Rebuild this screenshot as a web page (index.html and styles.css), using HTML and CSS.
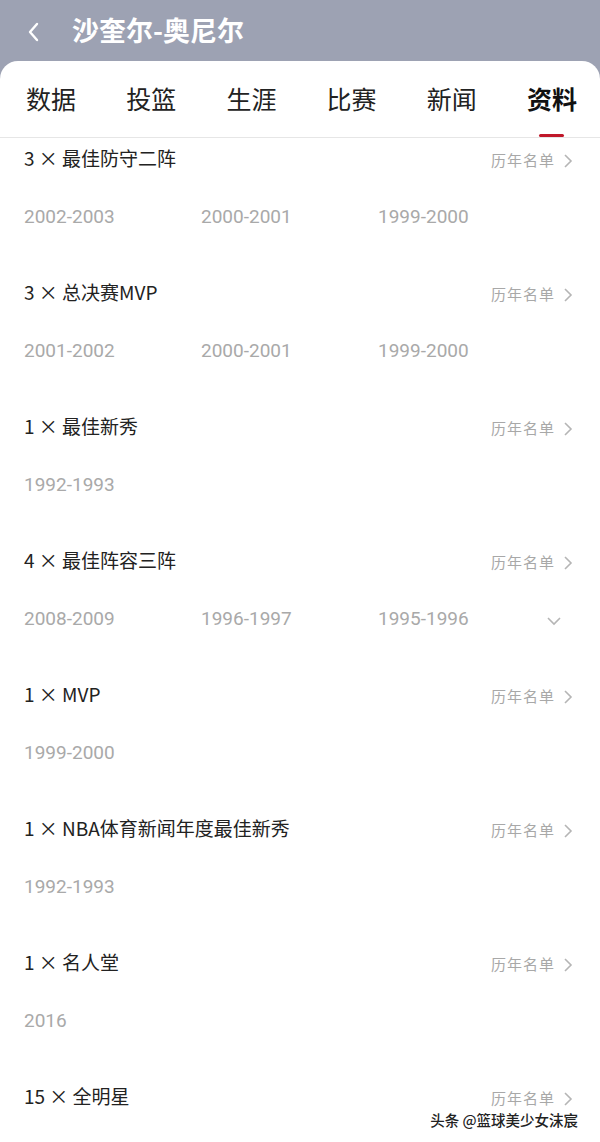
FILE: index.html
```html
<!DOCTYPE html>
<html lang="zh">
<head>
<meta charset="utf-8">
<link rel="stylesheet" href="styles.css">
</head>
<body>
<div class="page">
  <header class="topbar">
    <svg class="back" width="14" height="22" viewBox="0 0 14 22"><path d="M11 3 L4 11 L11 19" fill="none" stroke="#fff" stroke-width="2.4" stroke-linecap="round" stroke-linejoin="round"/></svg>
    <h1 class="title">沙奎尔-奥尼尔</h1>
  </header>
  <main class="card">
    <nav class="tabs">
      <span class="tab">数据</span>
      <span class="tab">投篮</span>
      <span class="tab">生涯</span>
      <span class="tab">比赛</span>
      <span class="tab">新闻</span>
      <span class="tab active">资料</span>
    </nav>
    <section class="list">
      <div class="item">
        <div class="item-head"><span class="name">3 × 最佳防守二阵</span><span class="more">历年名单<svg class="chev" width="10" height="16" viewBox="0 0 10 16"><path d="M2 2 L8 8 L2 14" fill="none" stroke="#b5b5b5" stroke-width="1.6"/></svg></span></div>
        <div class="years"><span>2002-2003</span><span>2000-2001</span><span>1999-2000</span></div>
      </div>
      <div class="item">
        <div class="item-head"><span class="name">3 × 总决赛MVP</span><span class="more">历年名单<svg class="chev" width="10" height="16" viewBox="0 0 10 16"><path d="M2 2 L8 8 L2 14" fill="none" stroke="#b5b5b5" stroke-width="1.6"/></svg></span></div>
        <div class="years"><span>2001-2002</span><span>2000-2001</span><span>1999-2000</span></div>
      </div>
      <div class="item">
        <div class="item-head"><span class="name">1 × 最佳新秀</span><span class="more">历年名单<svg class="chev" width="10" height="16" viewBox="0 0 10 16"><path d="M2 2 L8 8 L2 14" fill="none" stroke="#b5b5b5" stroke-width="1.6"/></svg></span></div>
        <div class="years"><span>1992-1993</span></div>
      </div>
      <div class="item">
        <div class="item-head"><span class="name">4 × 最佳阵容三阵</span><span class="more">历年名单<svg class="chev" width="10" height="16" viewBox="0 0 10 16"><path d="M2 2 L8 8 L2 14" fill="none" stroke="#b5b5b5" stroke-width="1.6"/></svg></span></div>
        <div class="years"><span>2008-2009</span><span>1996-1997</span><span>1995-1996</span><svg class="expand" width="16" height="10" viewBox="0 0 16 10"><path d="M2 2 L8 8 L14 2" fill="none" stroke="#b5b5b5" stroke-width="1.6"/></svg></div>
      </div>
      <div class="item">
        <div class="item-head"><span class="name">1 × MVP</span><span class="more">历年名单<svg class="chev" width="10" height="16" viewBox="0 0 10 16"><path d="M2 2 L8 8 L2 14" fill="none" stroke="#b5b5b5" stroke-width="1.6"/></svg></span></div>
        <div class="years"><span>1999-2000</span></div>
      </div>
      <div class="item">
        <div class="item-head"><span class="name">1 × NBA体育新闻年度最佳新秀</span><span class="more">历年名单<svg class="chev" width="10" height="16" viewBox="0 0 10 16"><path d="M2 2 L8 8 L2 14" fill="none" stroke="#b5b5b5" stroke-width="1.6"/></svg></span></div>
        <div class="years"><span>1992-1993</span></div>
      </div>
      <div class="item">
        <div class="item-head"><span class="name">1 × 名人堂</span><span class="more">历年名单<svg class="chev" width="10" height="16" viewBox="0 0 10 16"><path d="M2 2 L8 8 L2 14" fill="none" stroke="#b5b5b5" stroke-width="1.6"/></svg></span></div>
        <div class="years"><span>2016</span></div>
      </div>
      <div class="item">
        <div class="item-head"><span class="name">15 × 全明星</span><span class="more">历年名单<svg class="chev" width="10" height="16" viewBox="0 0 10 16"><path d="M2 2 L8 8 L2 14" fill="none" stroke="#b5b5b5" stroke-width="1.6"/></svg></span></div>
      </div>
    </section>
    <div class="watermark">头条 @篮球美少女沫宸</div>
  </main>
</div>
</body>
</html>
```
FILE: styles.css
```css
* { box-sizing: border-box; margin: 0; padding: 0; }
html, body { width: 600px; height: 1142px; overflow: hidden; }
body {
  background: #9da2b3;
  font-family: "Noto Sans CJK SC", "Noto Sans", Roboto, sans-serif;
}
.page { display: flex; flex-direction: column; height: 1142px; }
.topbar {
  flex: 0 0 61px;
  height: 61px;
  display: flex;
  align-items: center;
  padding-left: 26px;
}
.back { margin-right: 32px; margin-top: 2px; }
.title {
  color: #fff;
  font-size: 27px;
  font-weight: 700;
  line-height: 1;
  margin-top: -2px;
}
.card {
  flex: 1 1 auto;
  min-height: 0;
  overflow: hidden;
  background: #fff;
  border-radius: 18px 18px 0 0;
  position: relative;
}
.tabs {
  height: 77px;
  display: flex;
  justify-content: space-between;
  align-items: flex-start;
  padding: 20px 23px 0 26px;
  border-bottom: 1px solid #e6e6e6;
}
.tab {
  font-size: 25px;
  line-height: 34px;
  color: #222;
  position: relative;
  height: 56px;
}
.tab.active { font-weight: 700; color: #111; }
.tab.active::after {
  content: "";
  position: absolute;
  left: 12px;
  width: 25px;
  bottom: 0;
  height: 3px;
  border-radius: 2px;
  background: #c0182a;
}
.list { display: flex; flex-direction: column; }
.item {
  height: 134px;
  padding: 6px 27px 0 24px;
  display: flex;
  flex-direction: column;
}
.item-head {
  display: flex;
  justify-content: space-between;
  align-items: center;
  height: 28px;
}
.name {
  font-size: 19px;
  color: #222;
  line-height: 28px;
}
.more {
  display: flex;
  align-items: center;
  font-size: 15px;
  color: #a8a8a8;
  letter-spacing: 1px;
  margin-top: 2px;
}
.chev { margin-left: 8px; margin-top: 3px; }
.years {
  display: flex;
  align-items: center;
  margin-top: 30px;
  height: 28px;
  position: relative;
}
.years span {
  width: 177px;
  font-size: 19px;
  color: #a9a9a9;
  font-family: Roboto, "Noto Sans", sans-serif;
}
.expand { position: absolute; right: 11px; top: 12px; }
.watermark {
  position: absolute;
  right: 22px;
  top: 1048px;
  font-size: 14.5px;
  color: #222;
  font-weight: 500;
  text-shadow: 0 0 2px #fff, 0 0 2px #fff;
}
```
